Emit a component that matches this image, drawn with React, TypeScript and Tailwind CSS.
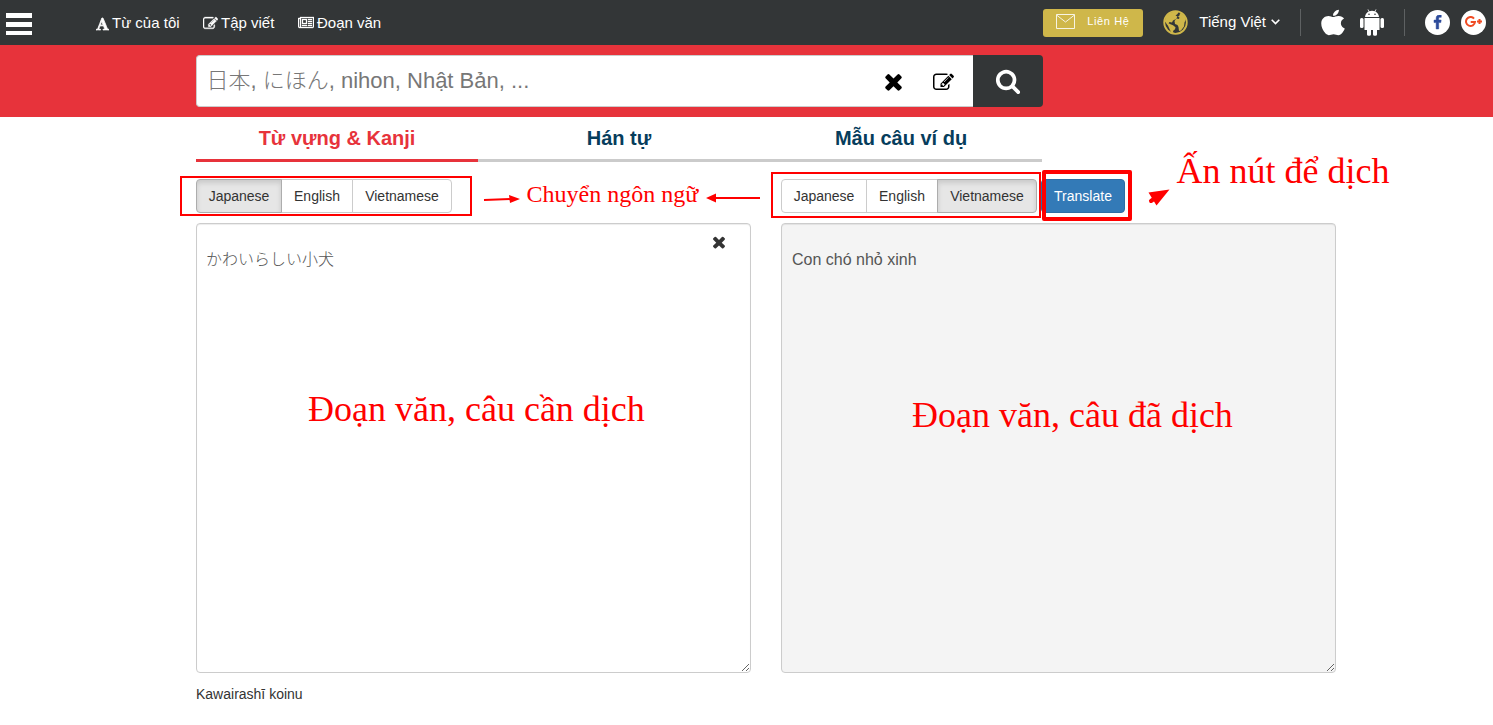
import type { ReactNode } from "react";
import { FaApple } from "react-icons/fa";

const sans = "font-['Liberation_Sans','Noto_Sans_CJK_JP',sans-serif]";
const note = "absolute whitespace-nowrap leading-none text-[#ff0000] font-['Liberation_Serif',serif]";

const PATHS = {
  font: "M725 559l-170 450q33 0 136.5 2t160.5 2q19 0 57-2-87-253-184-452zm-725 1105l2-79q23-7 56-12.5t57-10.5 49.5-14.5 44.5-29 31-50.5l237-616 280-724h128q8 14 11 21l205 480q33 78 106 257.5t114 274.5q15 34 58 144.5t72 168.5q20 45 35 57 19 15 88 29.5t84 20.5q6 38 6 57 0 4-.5 13t-.5 13q-63 0-190-8t-191-8q-76 0-215 7t-178 8q0-43 4-78l131-28q1 0 12.5-2.5t15.5-3.5 14.5-4.5 15-6.5 11-8 9-11 2.5-14q0-16-31-96.5t-72-177.5-42-100l-450-2q-26 58-76.5 195.5t-50.5 162.5q0 22 14 37.5t43.5 24.5 48.5 13.5 57 8.5 41 4q1 19 1 58 0 9-2 27-58 0-174.5-10t-174.5-10q-8 0-26.5 4t-21.5 4q-80 14-188 14z",
  edit: "M888 1184l116-116-152-152-116 116v56h96v96h56zm440-720q-16-16-33 1l-350 350q-17 17-1 33t33-1l350-350q17-17 1-33zm80 594v190q0 119-84.5 203.5t-203.5 84.5h-832q-119 0-203.5-84.5t-84.5-203.5v-832q0-119 84.5-203.5t203.5-84.5h832q63 0 117 25 15 7 18 23 3 17-9 29l-49 49q-14 14-32 8-23-6-45-6h-832q-66 0-113 47t-47 113v832q0 66 47 113t113 47h832q66 0 113-47t47-113v-126q0-13 9-22l64-64q15-15 35-7t20 29zm-96-738l288 288-672 672h-288v-288zm444 132l-92 92-288-288 92-92q28-28 68-28t68 28l152 152q28 28 28 68t-28 68z",
  news: "M1024 512h-384v384h384v-384zm128 640v128h-640v-128h640zm0-768v640h-640v-640h640zm640 768v128h-512v-128h512zm0-256v128h-512v-128h512zm0-256v128h-512v-128h512zm0-256v128h-512v-128h512zm-1536 960v-960h-128v960q0 26 19 45t45 19 45-19 19-45zm1664 0v-1088h-1536v1088q0 33-11 64h1483q26 0 45-19t19-45zm128-1216v1216q0 80-56 136t-136 56h-1664q-80 0-136-56t-56-136v-1088h256v-128h1792z",
  times: "M1490 1322q0 40-28 68l-136 136q-28 28-68 28t-68-28l-294-294-294 294q-28 28-68 28t-68-28l-136-136q-28-28-28-68t28-68l294-294-294-294q-28-28-28-68t28-68l136-136q28-28 68-28t68 28l294 294 294-294q28-28 68-28t68 28l136 136q28 28 28 68t-28 68l-294 294 294 294q28 28 28 68z",
  facebook: "M1343 12v264h-157q-86 0-116 36t-30 108v189h293l-39 296h-254v759h-306v-759h-255v-296h255v-218q0-186 104-288.500t277-102.500q147 0 228 12z",
  search: "M1216 832q0-185-131.5-316.5t-316.5-131.5-316.5 131.5-131.5 316.5 131.5 316.5 316.5 131.5 316.5-131.5 131.5-316.5zm512 832q0 52-38 90t-90 38q-54 0-90-38l-343-342q-179 124-399 124-143 0-273.5-55.5t-225-150-150-225-55.5-273.5 55.5-273.5 150-225 225-150 273.5-55.5 273.5 55.5 225 150 150 225 55.5 273.5q0 220-124 399l343 343q37 37 37 90z",
};

function Glyph({ name, className, wide = 1792 }: { name: keyof typeof PATHS; className: string; wide?: number }) {
  return (
    <svg className={`shrink-0 ${className}`} viewBox={`0 0 ${wide} 1792`} fill="currentColor">
      <path d={PATHS[name]} />
    </svg>
  );
}

function Header() {
  return (
    <header className="flex h-[45px] items-center bg-[#333637] pl-1.5 text-white">
      <div className="flex w-[26px] flex-col gap-1 pt-0.5">
        <i className="h-[5px] bg-white" />
        <i className="h-[5px] bg-white" />
        <i className="h-1 bg-white" />
      </div>
      <nav className="ml-16 flex items-center text-[15px] leading-5">
        <a className="flex w-[107px] items-center gap-[3px] whitespace-nowrap">
          <Glyph name="font" wide={1664} className="mt-0.5 h-[14px] w-[13px] stroke-white stroke-[110]" />
          Từ của tôi
        </a>
        <a className="flex w-[95px] items-center gap-[3px] whitespace-nowrap">
          <Glyph name="edit" className="mt-0.5 h-[15px] w-[15px] stroke-white stroke-[40]" />
          Tập viết
        </a>
        <a className="flex items-center gap-[3px] whitespace-nowrap">
          <Glyph name="news" wide={2048} className="h-[14px] w-4 stroke-white stroke-[40]" />
          Đoạn văn
        </a>
      </nav>
      <div className="ml-auto flex h-full items-center">
        <a className="flex h-7 w-[100px] items-center rounded-[3px] bg-[#cfb74a] pl-[13px] text-[11px] tracking-[0.6px]">
          <svg className="-mt-0.5 mr-3 h-[15px] w-[19px]" viewBox="0 0 19 15" fill="none" stroke="#fff" strokeWidth="1" opacity=".85">
            <path d="M.5.5h18v14H.5zM.5 1l9 7 9-7" />
          </svg>
          <span className="-mt-0.5">Liên Hệ</span>
        </a>
        <svg className="ml-5 h-[25px] w-[25px]" viewBox="0 0 25 25">
          <circle cx="12.5" cy="12.5" r="11.300" fill="none" stroke="#cfb74a" strokeWidth="1.800" />
          <path
            fill="#cfb74a"
            d="M1.500 11l2-5 4-3.500 4-1 4 .5-1 2-2 1.500 2 1-1.500 2.500-3 1.500-1 2-2.500-.5-1 1.200 2 1 2.500 1 2.500 2-.5 2-2 1.800.5 2.500-2.500-1.500-1.500-3-1.500-3.200zM17 3l3.500 2 2.500 4-1.500 3.500-.5 4-3 4-2 .5-.5-4-1-2-2.500-1-.5-3 2-2.500 2.500.5.500-1.500-1.500-1 1.500-1z"
          />
        </svg>
        <span className="ml-[11px] text-[15px]">Tiếng Việt</span>
        <svg className="ml-[5px] -mt-0.5 h-[6px] w-[9px]" viewBox="0 0 9 6" fill="none" stroke="#fff" strokeWidth="1.6">
          <path d="M.7.8l3.8 3.8L8.300.8" />
        </svg>
        <i className="ml-5 h-[27px] w-px bg-[#5e6162]" />
        <FaApple className="ml-5 h-[29px] w-6" preserveAspectRatio="none" />
        <svg className="ml-[15px] -mt-px h-[27px] w-6" viewBox="0 0 24 27" fill="#fff">
          <path d="M5 8a7 7 0 0 1 3.700-5.500L7.500.6l.6-.4 1.300 2a8 8 0 0 1 5.200 0l1.300-2 .6.4-1.200 1.900a7 7 0 0 1 3.700 5.500z" />
          <circle cx="9" cy="5.300" r=".8" fill="#333637" />
          <circle cx="15" cy="5.300" r=".8" fill="#333637" />
          <path d="M4.500 9h15v12H17v4.600a1.500 1.500 0 0 1-1.500 1.200h-1a1.500 1.500 0 0 1-1.500-1.200V21h-2v4.600a1.500 1.500 0 0 1-1.500 1.200h-1A1.500 1.500 0 0 1 7 25.600V21H4.500z" />
          <rect x="0" y="9" width="3.500" height="10" rx="1.500" />
          <rect x="20.500" y="9" width="3.500" height="10" rx="1.500" />
        </svg>
        <i className="ml-5 h-[27px] w-px bg-[#5e6162]" />
        <span className="ml-5 -mt-px flex h-[25px] w-[25px] items-center justify-center rounded-full bg-white text-[#2c4a9a]">
          <Glyph name="facebook" className="h-[15px] w-[15px] stroke-[#2c4a9a] stroke-[60]" />
        </span>
        <span className="ml-[11px] -mt-px mr-[7px] flex h-[25px] w-[25px] items-center justify-center rounded-full bg-white">
          <svg className="h-3 w-[18px]" viewBox="0 0 18 12" fill="none" stroke="#f04b23" strokeWidth="2">
            <path d="M9 2.600A4.500 4.500 0 1 0 10 6H5.700M12 5.500h5M14.500 3v5" />
          </svg>
        </span>
      </div>
    </header>
  );
}

function Tab({ active, children }: { active?: boolean; children: ReactNode }) {
  const tone = active ? "border-[#e7333b] text-[#e7333b]" : "border-[#cbcbcb] text-[#063d5c]";
  return (
    <div className={`flex h-[45px] w-[282px] justify-center border-b-[3px] pt-1.5 text-xl font-bold leading-[30px] ${tone}`}>
      {children}
    </div>
  );
}

function Languages({ active }: { active: string }) {
  const items = [
    ["Japanese", "w-[86px] rounded-l"],
    ["English", "w-[72px] -ml-px"],
    ["Vietnamese", "w-[100px] -ml-px rounded-r"],
  ];
  return (
    <div className="flex">
      {items.map(([label, shape]) => (
        <button
          key={label}
          className={`h-[34px] border text-sm text-[#333] ${shape} ${
            label === active
              ? "relative border-[#adadad] bg-[#e6e6e6] shadow-[inset_0_3px_5px_rgba(0,0,0,0.125)]"
              : "border-[#ccc] bg-white"
          }`}
        >
          {label}
        </button>
      ))}
    </div>
  );
}

const panel =
  "block h-[450px] w-full resize overflow-hidden rounded border border-[#ccc] px-2.5 pt-6 text-base leading-[23px] text-[#555] shadow-[inset_0_1px_1px_rgba(0,0,0,0.075)]";

export default function App() {
  return (
    <div className={`relative h-[725px] w-[1493px] overflow-hidden bg-white ${sans}`}>
      <Header />
      <div className="flex h-[72px] bg-[#e7333b] pl-[196px] pt-2.5">
        <div className="flex h-[52px] w-[777px] items-center rounded-l border border-r-0 border-[#ccc] bg-white pl-[9.5px] text-black">
          <div className="flex-1 pb-0.5 text-[22px] font-light text-[#777]">日本, にほん, nihon, Nhật Bản, ...</div>
          <Glyph name="times" className="h-[25px] w-[25px]" />
          <Glyph name="edit" className="ml-[27px] mr-[19px] mt-0.5 h-[21px] w-[21px]" />
        </div>
        <button className="flex h-[52px] w-[70px] items-center justify-center rounded-r bg-[#333637] text-white">
          <Glyph name="search" className="h-[26px] w-[26px]" />
        </button>
      </div>
      <div className="flex pl-[196px]">
        <Tab active>Từ vựng &amp; Kanji</Tab>
        <Tab>Hán tự</Tab>
        <Tab>Mẫu câu ví dụ</Tab>
      </div>
      <main className="flex gap-[30px] pl-[196px] pt-[17px]">
        <section className="w-[555px]">
          <Languages active="Japanese" />
          <div className="relative mt-2.5">
            <div className={`${panel} bg-white font-light`}>
              <span className="-ml-px">かわいらしい小犬</span>
            </div>
            <Glyph name="times" className="absolute right-[23.5px] top-2.5 h-[18px] w-[18px] text-[#333]" />
          </div>
          <p className="mt-[11px] text-sm text-[#333]">Kawairashī koinu</p>
        </section>
        <section className="w-[555px]">
          <div className="flex gap-1">
            <Languages active="Vietnamese" />
            <button className="h-[34px] w-[84px] rounded border border-[#2e6da4] bg-[#337ab7] text-sm text-white">
              Translate
            </button>
          </div>
          <div className={`${panel} mt-2.5 bg-[#f4f4f4]`}>Con chó nhỏ xinh</div>
        </section>
      </main>

      <div className="absolute left-[180px] top-[176px] h-10 w-[292px] border-2 border-[#ff0000]" />
      <div className="absolute left-[771px] top-[172px] h-[46px] w-[270px] border-2 border-[#ff0000]" />
      <div className="absolute left-[1042px] top-[170px] h-[51px] w-[90px] rounded-[2px] border-4 border-[#ff0000]" />
      <svg className="absolute left-[480px] top-[180px] h-10 w-[700px]" viewBox="480 180 700 40" fill="#ff0000" stroke="#ff0000">
        <path d="M484 200l28-1M760 198h-46" strokeWidth="2" />
        <path d="M509 195l11 4-10 4zM706 198l10-4.500v9zM1148.500 192.500l21-3-13 16z" stroke="none" />
        <path d="M1151 201l7-5" strokeWidth="4" strokeLinecap="round" />
      </svg>
      <span className={`${note} left-[526.5px] top-[182px] text-[24px]`}>Chuyển ngôn ngữ</span>
      <span className={`${note} left-[1176.5px] top-[153px] text-[36px]`}>Ấn nút để dịch</span>
      <span className={`${note} left-[308px] top-[391px] text-[36px]`}>Đoạn văn, câu cần dịch</span>
      <span className={`${note} left-[912px] top-[397px] text-[36px]`}>Đoạn văn, câu đã dịch</span>
    </div>
  );
}
